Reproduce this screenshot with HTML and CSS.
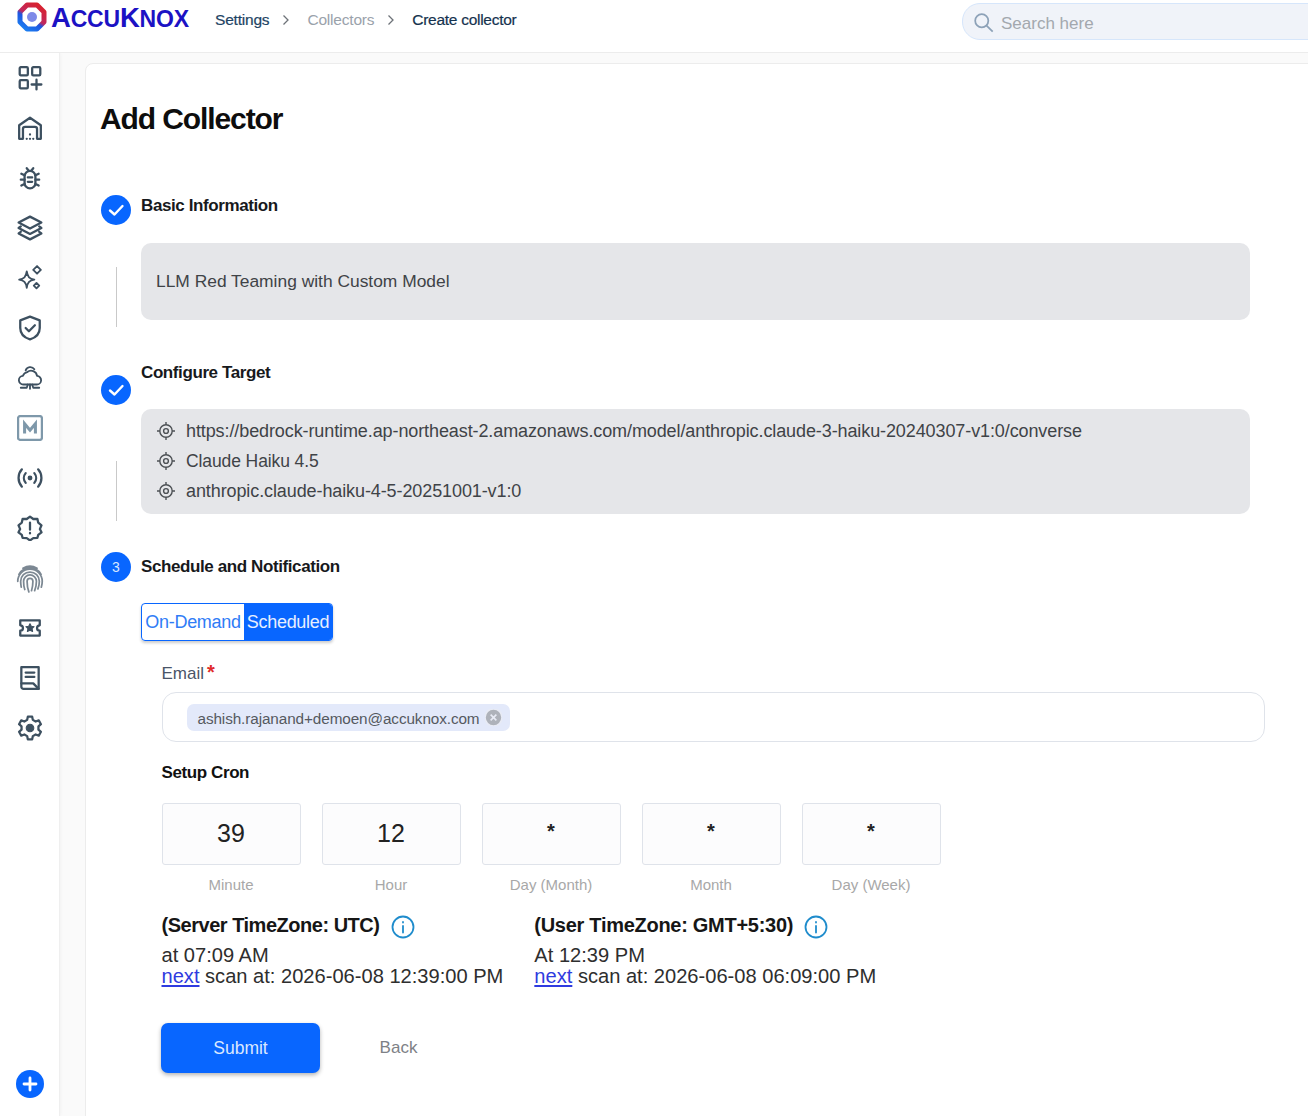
FILE: index.html
```html
<!DOCTYPE html>
<html lang="en">
<head>
<meta charset="UTF-8" />
<meta name="viewport" content="width=device-width, initial-scale=1" />
<title>Add Collector</title>
<link rel="stylesheet" href="styles.css">
</head>
<body>
  <header class="topbar">
    <div class="logo">
      <svg class="logo-mark" viewBox="0 0 30 30" aria-hidden="true">
        <defs>
          <linearGradient id="ring" x1="0.8" y1="0" x2="0.2" y2="1">
            <stop offset="0" stop-color="#d8222f"/>
            <stop offset="0.5" stop-color="#c0285f"/>
            <stop offset="0.62" stop-color="#1f55e0"/>
            <stop offset="1" stop-color="#1b7cf0"/>
          </linearGradient>
        </defs>
        <path d="M10 3h10l7 7v10l-7 7H10l-7-7V10z" fill="none" stroke="url(#ring)" stroke-width="5" stroke-linejoin="round"/>
        <circle cx="15" cy="15" r="8" fill="#fff"/>
        <circle cx="15" cy="15" r="5" fill="#7f8ae8"/>
      </svg>
      <span class="logo-text">A<small>CCU</small>K<small>NOX</small></span>
    </div>
    <nav class="crumbs">
      <a class="crumb">Settings</a>
      <svg class="crumb-sep" viewBox="0 0 8 12"><path d="M1.5 1.5 6 6l-4.5 4.5"/></svg>
      <a class="crumb crumb-muted">Collectors</a>
      <svg class="crumb-sep" viewBox="0 0 8 12"><path d="M1.5 1.5 6 6l-4.5 4.5"/></svg>
      <a class="crumb crumb-current">Create collector</a>
    </nav>
    <div class="search">
      <svg viewBox="0 0 24 24" class="search-icon"><circle cx="10" cy="10" r="7.5"/><path d="m15.5 15.5 7 7"/></svg>
      <span>Search here</span>
    </div>
  </header>

  <div class="shell">
    <aside class="sidebar">
      <ul class="nav-icons">
        <li><svg viewBox="0 0 24 24"><rect x="2.5" y="2" width="7.5" height="7.5" rx="1"/><rect x="14" y="2" width="7.5" height="7.5" rx="1"/><rect x="2.5" y="14" width="7.5" height="7.5" rx="1"/><path d="M18 13.5v9M13.5 18h9"/></svg></li>
        <li><svg viewBox="0 0 24 24"><path d="M2 22V9.5L12 2.5l10 7V22h-3.5v-9a2 2 0 0 0-2-2h-9a2 2 0 0 0-2 2v9z"/><path d="M9 22h.01M12 22h.01M15 22h.01M12 18h.01"/></svg></li>
        <li><svg viewBox="0 0 24 24"><rect x="7" y="5.5" width="10" height="16" rx="5"/><path d="M9 3l2 2.500M15 3l-2 2.500M7 9.500 4 8M17 9.500 20 8M7 13.500H3.500M17 13.500h3.500M7 17.500 4 19M17 17.500 20 19M10 11.500h4M10 15.500h4"/></svg></li>
        <li><svg viewBox="0 0 24 24"><path d="M12 1.500 22.500 7 12 12.500 1.500 7z"/><path d="M3.500 10.500 1.500 12 12 17.500 22.500 12l-2-1.500M3.500 15.500 1.500 17 12 22.500 22.500 17l-2-1.500"/></svg></li>
        <li class="nav-thin"><svg viewBox="0 0 24 24"><path d="M9 6c.8 5 2.500 6.700 7 7.500-4.500.8-6.200 2.500-7 7.500-.8-5-2.500-6.700-7-7.500 4.500-.8 6.200-2.500 7-7.500z"/><path d="m18.500 1 3.500 3.500-3.500 3.500L15 4.500zM18 16.500l2.500 2.500-2.500 2.500-2.500-2.500z"/></svg></li>
        <li><svg viewBox="0 0 24 24"><path d="M12 1.500 21 5v7c0 5.500-4 9-9 10.500C7 21 3 17.500 3 12V5z"/><path d="m8 12 3 3 5.500-5.500"/></svg></li>
        <li class="nav-thin"><svg viewBox="0 0 24 24"><path d="M6 18a4 4 0 0 1-.5-8 5 5 0 0 1 4-3.500 5.500 5.500 0 0 1 9 3.500 4 4 0 0 1-.5 8z"/><path d="M8 5a4.500 4.500 0 0 1 8-1"/><path d="M12 18v4M3.500 21H9l1-3M20.500 21H15l-1-3"/></svg></li>
        <li class="nav-m"><svg viewBox="0 0 24 24"><rect x="1" y="1" width="22" height="22" rx="2"/><path class="m-letter" d="M7 17V8l5 6 5-6v9"/></svg></li>
        <li><svg viewBox="0 0 24 24"><circle cx="12" cy="12" r="1.200"/><path d="M8 7.500a7 7 0 0 0 0 9M16 7.500a7 7 0 0 1 0 9M4.500 4a12 12 0 0 0 0 16M19.500 4a12 12 0 0 1 0 16"/></svg></li>
        <li><svg viewBox="0 0 24 24"><path d="M12 1.500l3 2.200 3.800-.2.800 3.600 3 2.400-1.500 3.500 1.500 3-3 2.400-.8 2.800-3.800.2-3 2.100-3-2.100-3.800-.2-.8-2.800-3-2.400 1.500-3-1.500-3.500 3-2.400.8-3.600 3.800.2z"/><path d="M12 7v6.500M12 16.500v.5"/></svg></li>
        <li class="nav-print"><svg viewBox="0 0 24 24"><path d="M6 2.800a12 12 0 0 1 12 0M2.500 8a11 11 0 0 1 19 0M1.500 14a10.500 10.500 0 0 1 21 0c0 2-.3 3.500-.8 5M4.500 19c-.3-1.500-.5-3-.5-5a8 8 0 0 1 16 0c0 2.500-.4 4.500-1.200 6.500M7.500 21c-.7-2-1-4.500-1-7a5.500 5.500 0 0 1 11 0c0 3-.5 5.500-1.500 8M11 23c-1-2.500-1.500-5.500-1.500-9a2.500 2.500 0 0 1 5 0c0 3-.4 5.500-1.200 8"/></svg></li>
        <li><svg viewBox="0 0 24 24"><path d="M3 5h18v4.500a2.500 2.500 0 0 0 0 5V19H3v-4.500a2.500 2.500 0 0 0 0-5z"/><path class="solid" d="m12 8 1.200 2.400 2.600.4-1.900 1.800.5 2.600-2.400-1.200-2.400 1.200.5-2.600-1.900-1.800 2.600-.4z"/></svg></li>
        <li><svg viewBox="0 0 24 24"><path d="M4 2h16v20H6a2 2 0 0 1-2-2z"/><path d="M8 7h8M8 11h8M4 17h11l5 5"/></svg></li>
        <li><svg viewBox="0 0 24 24"><path d="m10 1.500h4l.6 3 2.600 1.500 2.900-1 2 3.500-2.300 2 0 3 2.300 2-2 3.500-2.900-1-2.600 1.500-.6 3h-4l-.6-3-2.600-1.500-2.900 1-2-3.500 2.300-2 0-3-2.300-2 2-3.500 2.900 1 2.600-1.500z"/><circle class="solid" cx="12" cy="12" r="3.500"/></svg></li>
      </ul>
      <div class="add-btn">
        <svg viewBox="0 0 28 28"><path d="M14 8v12M8 14h12"/></svg>
      </div>
    </aside>

    <main class="content">
      <section class="card">
        <h1>Add Collector</h1>

        <div class="step step-one">
          <span class="step-dot"><svg viewBox="0 0 30 30"><path d="m9 15.500 4.500 4L21.500 11"/></svg></span>
          <h2>Basic Information</h2>
          <span class="rail"></span>
          <div class="summary summary-single">LLM Red Teaming with Custom Model</div>
        </div>

        <div class="step step-two">
          <span class="step-dot"><svg viewBox="0 0 30 30"><path d="m9 15.500 4.500 4L21.500 11"/></svg></span>
          <h2>Configure Target</h2>
          <span class="rail"></span>
          <div class="summary">
            <div class="target"><svg viewBox="0 0 20 20"><circle cx="10" cy="10" r="6.200"/><circle cx="10" cy="10" r="2.400"/><path d="M10 1v2.800M10 16.200V19M1 10h2.800M16.200 10H19"/></svg>https://bedrock-runtime.ap-northeast-2.amazonaws.com/model/anthropic.claude-3-haiku-20240307-v1:0/converse</div>
            <div class="target target-name"><svg viewBox="0 0 20 20"><circle cx="10" cy="10" r="6.200"/><circle cx="10" cy="10" r="2.400"/><path d="M10 1v2.800M10 16.200V19M1 10h2.800M16.200 10H19"/></svg>Claude Haiku 4.5</div>
            <div class="target"><svg viewBox="0 0 20 20"><circle cx="10" cy="10" r="6.200"/><circle cx="10" cy="10" r="2.400"/><path d="M10 1v2.800M10 16.200V19M1 10h2.800M16.200 10H19"/></svg>anthropic.claude-haiku-4-5-20251001-v1:0</div>
          </div>
        </div>

        <div class="step step-three">
          <span class="step-dot step-num">3</span>
          <h2>Schedule and Notification</h2>
        </div>

        <div class="toggle">
          <button class="toggle-off">On-Demand</button>
          <button class="toggle-on">Scheduled</button>
        </div>

        <form class="schedule">
          <label class="field-label">Email<span class="req">*</span></label>
          <div class="email-input">
            <span class="chip"><span class="chip-text">ashish.rajanand+demoen@accuknox.com</span>
              <svg viewBox="0 0 16 16"><circle cx="8" cy="8" r="8"/><path d="m5.300 5.300 5.400 5.400M10.700 5.300l-5.400 5.400"/></svg>
            </span>
          </div>

          <h3>Setup Cron</h3>
          <div class="cron">
            <div class="cron-col"><div class="cron-box">39</div><span>Minute</span></div>
            <div class="cron-col"><div class="cron-box">12</div><span>Hour</span></div>
            <div class="cron-col"><div class="cron-box cron-star">*</div><span>Day (Month)</span></div>
            <div class="cron-col"><div class="cron-box cron-star">*</div><span>Month</span></div>
            <div class="cron-col"><div class="cron-box cron-star">*</div><span>Day (Week)</span></div>
          </div>

          <div class="zones">
            <div class="zone">
              <h4>(Server TimeZone: UTC) <svg viewBox="0 0 24 24"><circle cx="12" cy="12" r="10.500"/><path d="M12 11v6.500M12 7v.6"/></svg></h4>
              <p>at 07:09 AM<br><a href="#">next</a> scan at: 2026-06-08 12:39:00 PM</p>
            </div>
            <div class="zone zone-user">
              <h4>(User TimeZone: GMT+5:30) <svg viewBox="0 0 24 24"><circle cx="12" cy="12" r="10.500"/><path d="M12 11v6.500M12 7v.6"/></svg></h4>
              <p>At 12:39 PM<br><a href="#">next</a> scan at: 2026-06-08 06:09:00 PM</p>
            </div>
          </div>

          <div class="actions">
            <button class="submit" type="button">Submit</button>
            <button class="back" type="button">Back</button>
          </div>
        </form>
      </section>
    </main>
  </div>
</body>
</html>
```

FILE: styles.css
```css
* {
  box-sizing: border-box;
}
body {
  margin: 0;
  height: 1116px;
  overflow: hidden;
  background: #fff;
  color: #3f4347;
  font-family: "Liberation Sans", Arial, sans-serif;
  font-size: 17px;
}

/* top bar */
.topbar {
  height: 53px;
  display: flex;
  padding: 2px 0 0 17px;
  border-bottom: 1px solid #ececec;
}
.logo {
  display: flex;
  align-items: flex-start;
  gap: 4px;
  width: 198px;
  flex: none;
}
.logo-mark {
  width: 30px;
  height: 30px;
}
.logo-text {
  color: #1c12c4;
  font-size: 27.5px;
  line-height: 31px;
  font-weight: 700;
  letter-spacing: -0.2px;
}
.logo-text small {
  font-size: 23px;
}
.crumbs {
  flex: 1;
  display: flex;
  align-items: flex-start;
  height: 36px;
  padding-top: 9px;
  font-size: 15.5px;
  letter-spacing: -0.2px;
}
.crumb {
  color: #1e4464;
  -webkit-text-stroke: 0.2px currentColor;
}
.crumb-muted {
  color: #9aa2ab;
  -webkit-text-stroke: 0;
}
.crumb-current {
  color: #15324e;
  letter-spacing: -0.28px;
}
.crumb-sep {
  width: 8px;
  height: 12px;
  margin: 3px 17px 0 13px;
  fill: none;
  stroke: #6d7278;
  stroke-width: 1.3;
}
.search {
  flex: none;
  width: 370px;
  height: 37px;
  margin: 1px -24px 0 0;
  display: flex;
  align-items: center;
  padding: 1px 0 0 10px;
  background: #f0f3f9;
  border: 1px solid #d6e6fb;
  border-radius: 18px;
  color: #a3a8ae;
}
.search span {
  padding-top: 3px;
}
.search-icon {
  width: 21px;
  height: 21px;
  margin-right: 7px;
  fill: none;
  stroke: #8da2b8;
  stroke-width: 2;
}

/* left rail */
.shell {
  display: flex;
  height: 1063px;
  overflow: hidden;
  background: #fafafa;
}
.sidebar {
  width: 60px;
  flex: none;
  display: flex;
  flex-direction: column;
  align-items: center;
  background: #fff;
  border-right: 1px solid #efefef;
  box-shadow: 1px 0 3px rgba(0, 0, 0, 0.03);
  padding: 12px 0 18px;
}
.nav-icons {
  list-style: none;
  margin: 0;
  padding: 0;
  display: flex;
  flex-direction: column;
  gap: 24px;
}
.nav-icons li {
  width: 26px;
  height: 26px;
}
.nav-icons svg {
  display: block;
  width: 26px;
  height: 26px;
  fill: none;
  stroke: #3d5060;
  stroke-width: 2.1;
  stroke-linejoin: round;
  stroke-linecap: round;
}
.nav-icons .solid {
  fill: #3d5060;
  stroke-width: 1;
}
.nav-icons .nav-thin svg {
  stroke-width: 1.7;
}
.nav-icons .nav-m svg {
  stroke: #7e98aa;
}
.nav-icons .nav-m .m-letter {
  stroke-width: 2.8;
  stroke-linejoin: miter;
  stroke-linecap: butt;
}
.nav-icons .nav-print svg {
  width: 28px;
  height: 28px;
  margin: 0 -1px;
  stroke: #7c8893;
  stroke-width: 1.5;
}
.add-btn {
  margin-top: auto;
  width: 28px;
  height: 28px;
  background: #0866ff;
  border-radius: 50%;
}
.add-btn svg {
  display: block;
  fill: none;
  stroke: #fff;
  stroke-width: 2.8;
  stroke-linecap: round;
}

/* main card */
.content {
  flex: 1;
  padding: 10px 0 0 25px;
  min-width: 0;
}
.card {
  height: 1100px;
  width: 1240px;
  background: #fff;
  border: 1px solid #ececec;
  border-radius: 8px 0 0 0;
  padding: 37px 0 0 15px;
}
h1 {
  margin: 0 0 58px -1px;
  color: #0d0d0d;
  font-size: 30px;
  line-height: 36px;
  font-weight: 700;
  letter-spacing: -1.1px;
}

/* steps */
.step {
  display: grid;
  grid-template-columns: 30px 1109px;
  column-gap: 10px;
}
.step h2 {
  margin: 0;
  color: #17191c;
  font-size: 17px;
  line-height: 20px;
  font-weight: 700;
  letter-spacing: -0.4px;
}
.step-dot {
  display: flex;
  align-items: center;
  justify-content: center;
  width: 30px;
  height: 30px;
  border-radius: 50%;
  background: #0866ff;
  color: #d9e7ff;
  font-size: 14px;
}
.step-dot svg {
  width: 30px;
  height: 30px;
  fill: none;
  stroke: #fff;
  stroke-width: 2.4;
  stroke-linecap: round;
  stroke-linejoin: round;
}
.rail {
  width: 1px;
  margin-left: 15px;
  background: #c9c9c9;
}
.summary {
  background: #e5e6e9;
  border-radius: 10px;
  padding: 7px 15px;
}
.summary-single {
  display: flex;
  align-items: center;
  height: 77px;
  font-size: 17.4px;
}
.step-one {
  grid-template-rows: 20px auto;
  margin-bottom: 42px;
}
.step-one .step-dot {
  grid-row: 1 / span 2;
  grid-column: 1;
}
.step-one h2 {
  grid-column: 2;
  grid-row: 1;
  padding-top: 1px;
}
.step-one .rail {
  grid-column: 1;
  grid-row: 2;
  height: 60px;
  margin-top: 52px;
  margin-bottom: -7px;
}
.step-one .summary {
  grid-column: 2;
  grid-row: 2;
  margin-top: 28px;
}
.step-two {
  grid-template-rows: 20px auto;
  margin-bottom: 38px;
}
.step-two h2 {
  grid-column: 2;
  grid-row: 1;
  padding-top: 1px;
}
.step-two .step-dot {
  grid-column: 1;
  grid-row: 1 / span 2;
  margin-top: 13px;
}
.step-two .summary {
  grid-column: 2;
  grid-row: 2;
  margin-top: 27px;
}
.step-two .rail {
  grid-column: 1;
  grid-row: 2;
  height: 60px;
  margin-top: 79px;
  margin-bottom: -7px;
}
.target {
  display: flex;
  align-items: center;
  gap: 10px;
  height: 30px;
  font-size: 18px;
  letter-spacing: -0.1px;
  white-space: nowrap;
}
.target-name {
  font-size: 17.5px;
}
.target svg {
  width: 20px;
  height: 20px;
  fill: none;
  stroke: #4c5054;
  stroke-width: 1.4;
}
.step-three {
  align-items: center;
}

/* scheduled / on-demand */
.toggle {
  display: flex;
  width: 192px;
  height: 38px;
  margin: 21px 0 0 40px;
  border: 1px solid #0866ff;
  border-radius: 4px;
  box-shadow: 0 2px 3px rgba(0, 0, 0, 0.2);
  overflow: hidden;
}
.toggle button {
  border: 0;
  padding: 0;
  background: none;
  font: inherit;
  font-size: 18px;
  letter-spacing: -0.3px;
}
.toggle .toggle-off {
  width: 102px;
  color: #2f7cf6;
}
.toggle .toggle-on {
  flex: 1;
  color: #e6efff;
  background: #0866ff;
}

/* schedule form */
.schedule {
  margin: 21px 0 0 60.5px;
}
.field-label {
  display: block;
  height: 30px;
  line-height: 24px;
  color: #4a5568;
}
.req {
  margin-left: 3px;
  color: #e02b2b;
  font-size: 20px;
  font-weight: 700;
  line-height: 0;
}
.email-input {
  width: 1103px;
  height: 50px;
  display: flex;
  align-items: center;
  padding-left: 24px;
  background: #fff;
  border: 1.5px solid #dfe3ea;
  border-radius: 14px;
}
.chip {
  display: flex;
  align-items: center;
  gap: 5px;
  height: 27px;
  padding: 0 8px 0 11px;
  border-radius: 7px;
  background: #e3e9fa;
  color: #55595f;
  font-size: 15.3px;
  letter-spacing: -0.1px;
}
.chip-text {
  padding-top: 3px;
}
.chip svg {
  width: 17px;
  height: 17px;
  fill: #aeb2ba;
  stroke: #e8ebf5;
  stroke-width: 1.5;
}
h3 {
  margin: 20px 0 19px;
  color: #111;
  font-size: 17px;
  line-height: 22px;
  font-weight: 700;
  letter-spacing: -0.4px;
}
.cron {
  display: flex;
  gap: 21px;
}
.cron-col {
  width: 139px;
  text-align: center;
  color: #a8a8a8;
  font-size: 15px;
}
.cron-col span {
  display: block;
  margin-top: 11px;
  line-height: 18px;
}
.cron-box {
  height: 62px;
  line-height: 59px;
  background: #fcfcfd;
  border: 1.5px solid #dfe3ea;
  border-radius: 3px;
  color: #222;
  font-size: 25px;
}
.cron-box.cron-star {
  line-height: 55px;
  font-size: 20px;
  font-weight: 700;
}
.zones {
  display: flex;
  gap: 31px;
  margin-top: 18px;
}
.zone h4 {
  display: flex;
  align-items: center;
  gap: 11px;
  margin: 0;
  height: 26px;
  color: #161616;
  font-size: 20px;
  font-weight: 700;
  letter-spacing: -0.48px;
}
.zone-user h4 {
  letter-spacing: -0.28px;
}
.zone h4 svg {
  width: 24px;
  height: 24px;
  margin-top: 4px;
  fill: none;
  stroke: #1f8ccc;
  stroke-width: 1.8;
  stroke-linecap: round;
}
.zone p {
  margin: 7px 0 0;
  color: #2e2e2e;
  font-size: 20.1px;
  line-height: 21px;
  white-space: nowrap;
}
.zone a {
  color: #2f3be0;
}
.actions {
  display: flex;
  align-items: center;
  gap: 39px;
  margin: 36px 0 0 -0.5px;
}
.actions button {
  height: 50px;
  border: 0;
  font: inherit;
}
.actions .submit {
  width: 159px;
  background: #0866ff;
  border-radius: 7px;
  color: #dbe8ff;
  font-size: 17.5px;
  box-shadow: 0 2px 4px rgba(0, 0, 0, 0.3);
}
.actions .back {
  width: 79px;
  background: none;
  color: #7e8186;
}
```
